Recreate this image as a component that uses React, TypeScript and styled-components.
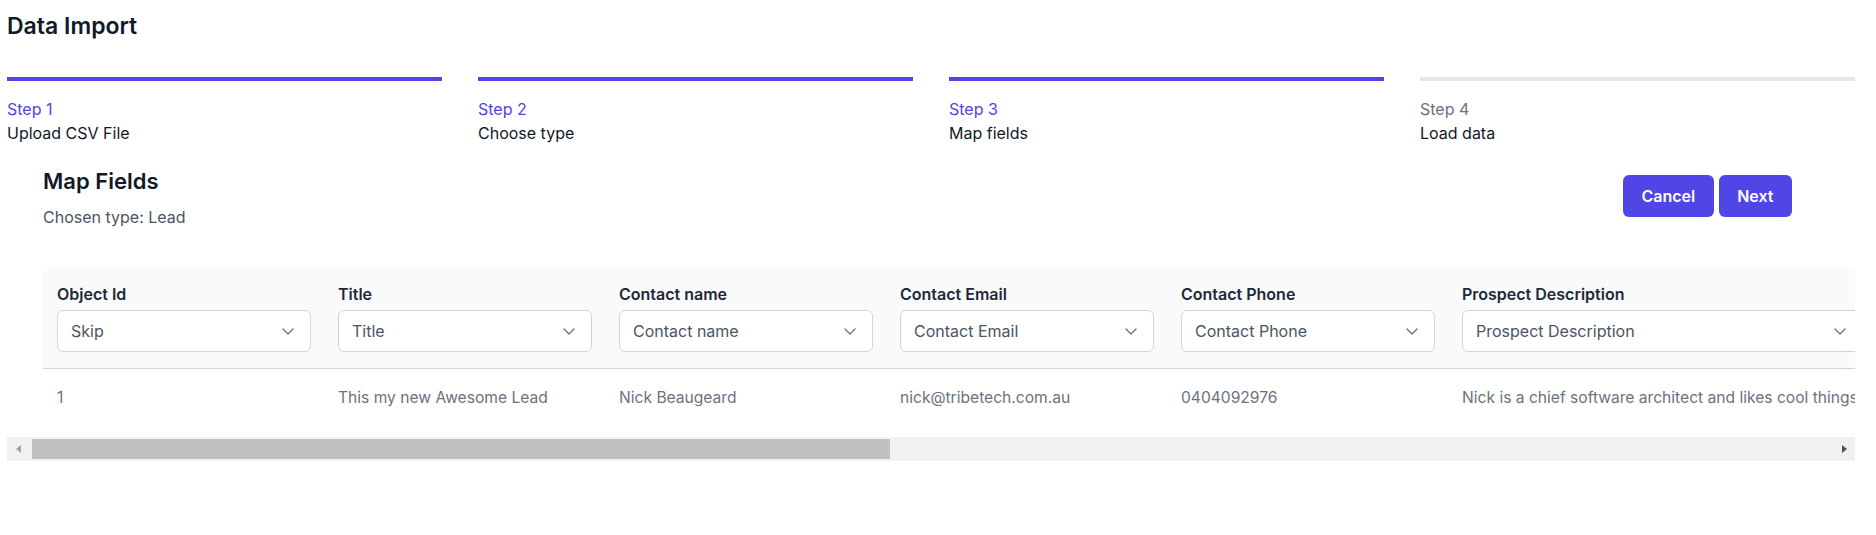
import React from 'react';
import styled, { createGlobalStyle } from 'styled-components';

const GlobalStyle = createGlobalStyle`
  html, body { margin: 0; padding: 0; background: #ffffff; }
  body {
    font-family: Inter, "Noto Sans", "Liberation Sans", sans-serif;
    color: #111827;
    -webkit-font-smoothing: antialiased;
  }
  * { box-sizing: border-box; }
`;

const Page = styled.div`
  width: 1848px;
  margin-left: 7px;
  padding-top: 10px;
`;

const PageTitle = styled.h1`
  margin: 0;
  font-size: 23px;
  line-height: 32px;
  font-weight: 600;
  color: #111827;
`;

const Steps = styled.ol`
  list-style: none;
  margin: 35px 0 0;
  padding: 0;
  display: grid;
  grid-template-columns: repeat(4, 1fr);
  column-gap: 36px;
`;

const Step = styled.li<{ $done: boolean }>`
  border-top: 4px solid ${(p) => (p.$done ? '#4f46e5' : '#e5e7eb')};
  padding-top: 16px;
`;

const StepNumber = styled.span<{ $done: boolean }>`
  display: block;
  font-size: 16px;
  line-height: 24px;
  color: ${(p) => (p.$done ? '#4f46e5' : '#6b7280')};
`;

const StepName = styled.span`
  display: block;
  font-size: 16px;
  line-height: 24px;
  color: #111827;
`;

const Header = styled.div`
  margin-top: 22px;
  padding: 0 63px 0 36px;
  display: flex;
  align-items: center;
  justify-content: space-between;
`;

const HeadingBlock = styled.div`
  display: flex;
  flex-direction: column;
`;

const SectionTitle = styled.h2`
  margin: 0;
  font-size: 22px;
  line-height: 28px;
  font-weight: 600;
  color: #111827;
`;

const Subtitle = styled.p`
  margin: 10px 0 0;
  font-size: 16px;
  line-height: 24px;
  color: #4b5563;
`;

const Actions = styled.div`
  display: flex;
  gap: 5px;
  margin-top: -4px;
`;

const Button = styled.button`
  height: 42px;
  padding: 0 18.5px;
  border: none;
  border-radius: 6px;
  background: #4f46e5;
  color: #ffffff;
  font-family: inherit;
  font-size: 16px;
  line-height: 24px;
  font-weight: 600;
  cursor: pointer;
`;

const ScrollArea = styled.div`
  margin-top: 39px;
  overflow-x: auto;
  overflow-y: hidden;
  padding-bottom: 12px;
  scrollbar-width: none;
  &::-webkit-scrollbar { display: none; }
`;

const Table = styled.table<{ $width: number }>`
  width: ${(p) => p.$width}px;
  margin-left: 36px;
  border-collapse: separate;
  border-spacing: 0;
  table-layout: fixed;
`;

const HeadCell = styled.th`
  background: #f9fafb;
  padding: 14px 13px 16px 14px;
  border-bottom: 1px solid #d1d5db;
  text-align: left;
  vertical-align: top;
  &:first-child { border-top-left-radius: 8px; }
  &:last-child { border-top-right-radius: 8px; }
`;

const FieldLabel = styled.div`
  font-size: 16px;
  line-height: 24px;
  font-weight: 600;
  color: #1f2937;
  white-space: nowrap;
`;

const SelectBox = styled.div`
  margin-top: 4px;
  height: 42px;
  width: 100%;
  padding: 0 16px 0 13px;
  border: 1px solid #d1d5db;
  border-radius: 6px;
  background: #ffffff;
  display: flex;
  align-items: center;
  justify-content: space-between;
  font-size: 16px;
  line-height: 24px;
  font-weight: 400;
  color: #4b5563;
  white-space: nowrap;
`;

const Cell = styled.td`
  padding: 17px 13px 15px 14px;
  font-size: 15.6px;
  line-height: 24px;
  color: #6b7280;
  white-space: nowrap;
  overflow: hidden;
`;

const ScrollBar = styled.div`
  display: flex;
  height: 24px;
  background: #f1f1f1;
`;

const ScrollButton = styled.div<{ $dir: 'left' | 'right' }>`
  flex: 0 0 24px;
  display: flex;
  align-items: center;
  justify-content: center;
  &::before {
    content: '';
    width: 0;
    height: 0;
    border-top: 4.5px solid transparent;
    border-bottom: 4.5px solid transparent;
    ${(p) =>
      p.$dir === 'left'
        ? 'border-right: 5px solid #a3a3a3; margin-left: -2px;'
        : 'border-left: 5px solid #505050; margin-left: 2px;'}
  }
`;

const ScrollTrack = styled.div`
  flex: 1;
  padding: 2px 0 2px 1px;
  display: flex;
`;

const ScrollThumb = styled.div`
  height: 100%;
  background: #c1c1c1;
`;

const Chevron = () => (
  <svg width="12" height="7" viewBox="0 0 12 7" fill="none">
    <path d="M1 1l5 5 5-5" stroke="#6b7280" strokeWidth="1.4" strokeLinecap="round" strokeLinejoin="round" />
  </svg>
);

const steps = [
  { n: 'Step 1', name: 'Upload CSV File', done: true },
  { n: 'Step 2', name: 'Choose type', done: true },
  { n: 'Step 3', name: 'Map fields', done: true },
  { n: 'Step 4', name: 'Load data', done: false },
];

const columns = [
  { label: 'Object Id', mapped: 'Skip', value: '1', width: 281 },
  { label: 'Title', mapped: 'Title', value: 'This my new Awesome Lead', width: 281 },
  { label: 'Contact name', mapped: 'Contact name', value: 'Nick Beaugeard', width: 281 },
  { label: 'Contact Email', mapped: 'Contact Email', value: 'nick@tribetech.com.au', width: 281 },
  { label: 'Contact Phone', mapped: 'Contact Phone', value: '0404092976', width: 281 },
  {
    label: 'Prospect Description',
    mapped: 'Prospect Description',
    value: 'Nick is a chief software architect and likes cool things',
    width: 428,
  },
  { label: 'Company', mapped: 'Company', value: 'TribeTech', width: 281 },
  { label: 'Website', mapped: 'Website', value: 'tribetech.com.au', width: 281 },
  { label: 'Industry', mapped: 'Industry', value: 'Software', width: 281 },
  { label: 'Lead Source', mapped: 'Lead Source', value: 'Web', width: 281 },
  { label: 'Status', mapped: 'Status', value: 'New', width: 281 },
  { label: 'Owner', mapped: 'Owner', value: 'Admin', width: 281 },
  { label: 'Created Date', mapped: 'Created Date', value: '2023-05-01', width: 322 },
];

const VIEW_WIDTH = 1848;
const TRACK_WIDTH = VIEW_WIDTH - 48;
const tableWidth = columns.reduce((sum, c) => sum + c.width, 0);
const scrollWidth = tableWidth + 36;
const thumbWidth = Math.round((TRACK_WIDTH * VIEW_WIDTH) / scrollWidth);

export default function App() {
  return (
    <>
      <GlobalStyle />
      <Page>
        <PageTitle>Data Import</PageTitle>
        <Steps>
          {steps.map((s) => (
            <Step key={s.n} $done={s.done}>
              <StepNumber $done={s.done}>{s.n}</StepNumber>
              <StepName>{s.name}</StepName>
            </Step>
          ))}
        </Steps>

        <Header>
          <HeadingBlock>
            <SectionTitle>Map Fields</SectionTitle>
            <Subtitle>Chosen type: Lead</Subtitle>
          </HeadingBlock>
          <Actions>
            <Button>Cancel</Button>
            <Button>Next</Button>
          </Actions>
        </Header>

        <ScrollArea>
          <Table $width={tableWidth}>
            <colgroup>
              {columns.map((c) => (
                <col key={c.label} style={{ width: c.width }} />
              ))}
            </colgroup>
            <thead>
              <tr>
                {columns.map((c) => (
                  <HeadCell key={c.label}>
                    <FieldLabel>{c.label}</FieldLabel>
                    <SelectBox>
                      <span>{c.mapped}</span>
                      <Chevron />
                    </SelectBox>
                  </HeadCell>
                ))}
              </tr>
            </thead>
            <tbody>
              <tr>
                {columns.map((c) => (
                  <Cell key={c.label}>{c.value}</Cell>
                ))}
              </tr>
            </tbody>
          </Table>
        </ScrollArea>
        <ScrollBar>
          <ScrollButton $dir="left" />
          <ScrollTrack>
            <ScrollThumb style={{ width: thumbWidth }} />
          </ScrollTrack>
          <ScrollButton $dir="right" />
        </ScrollBar>
      </Page>
    </>
  );
}
